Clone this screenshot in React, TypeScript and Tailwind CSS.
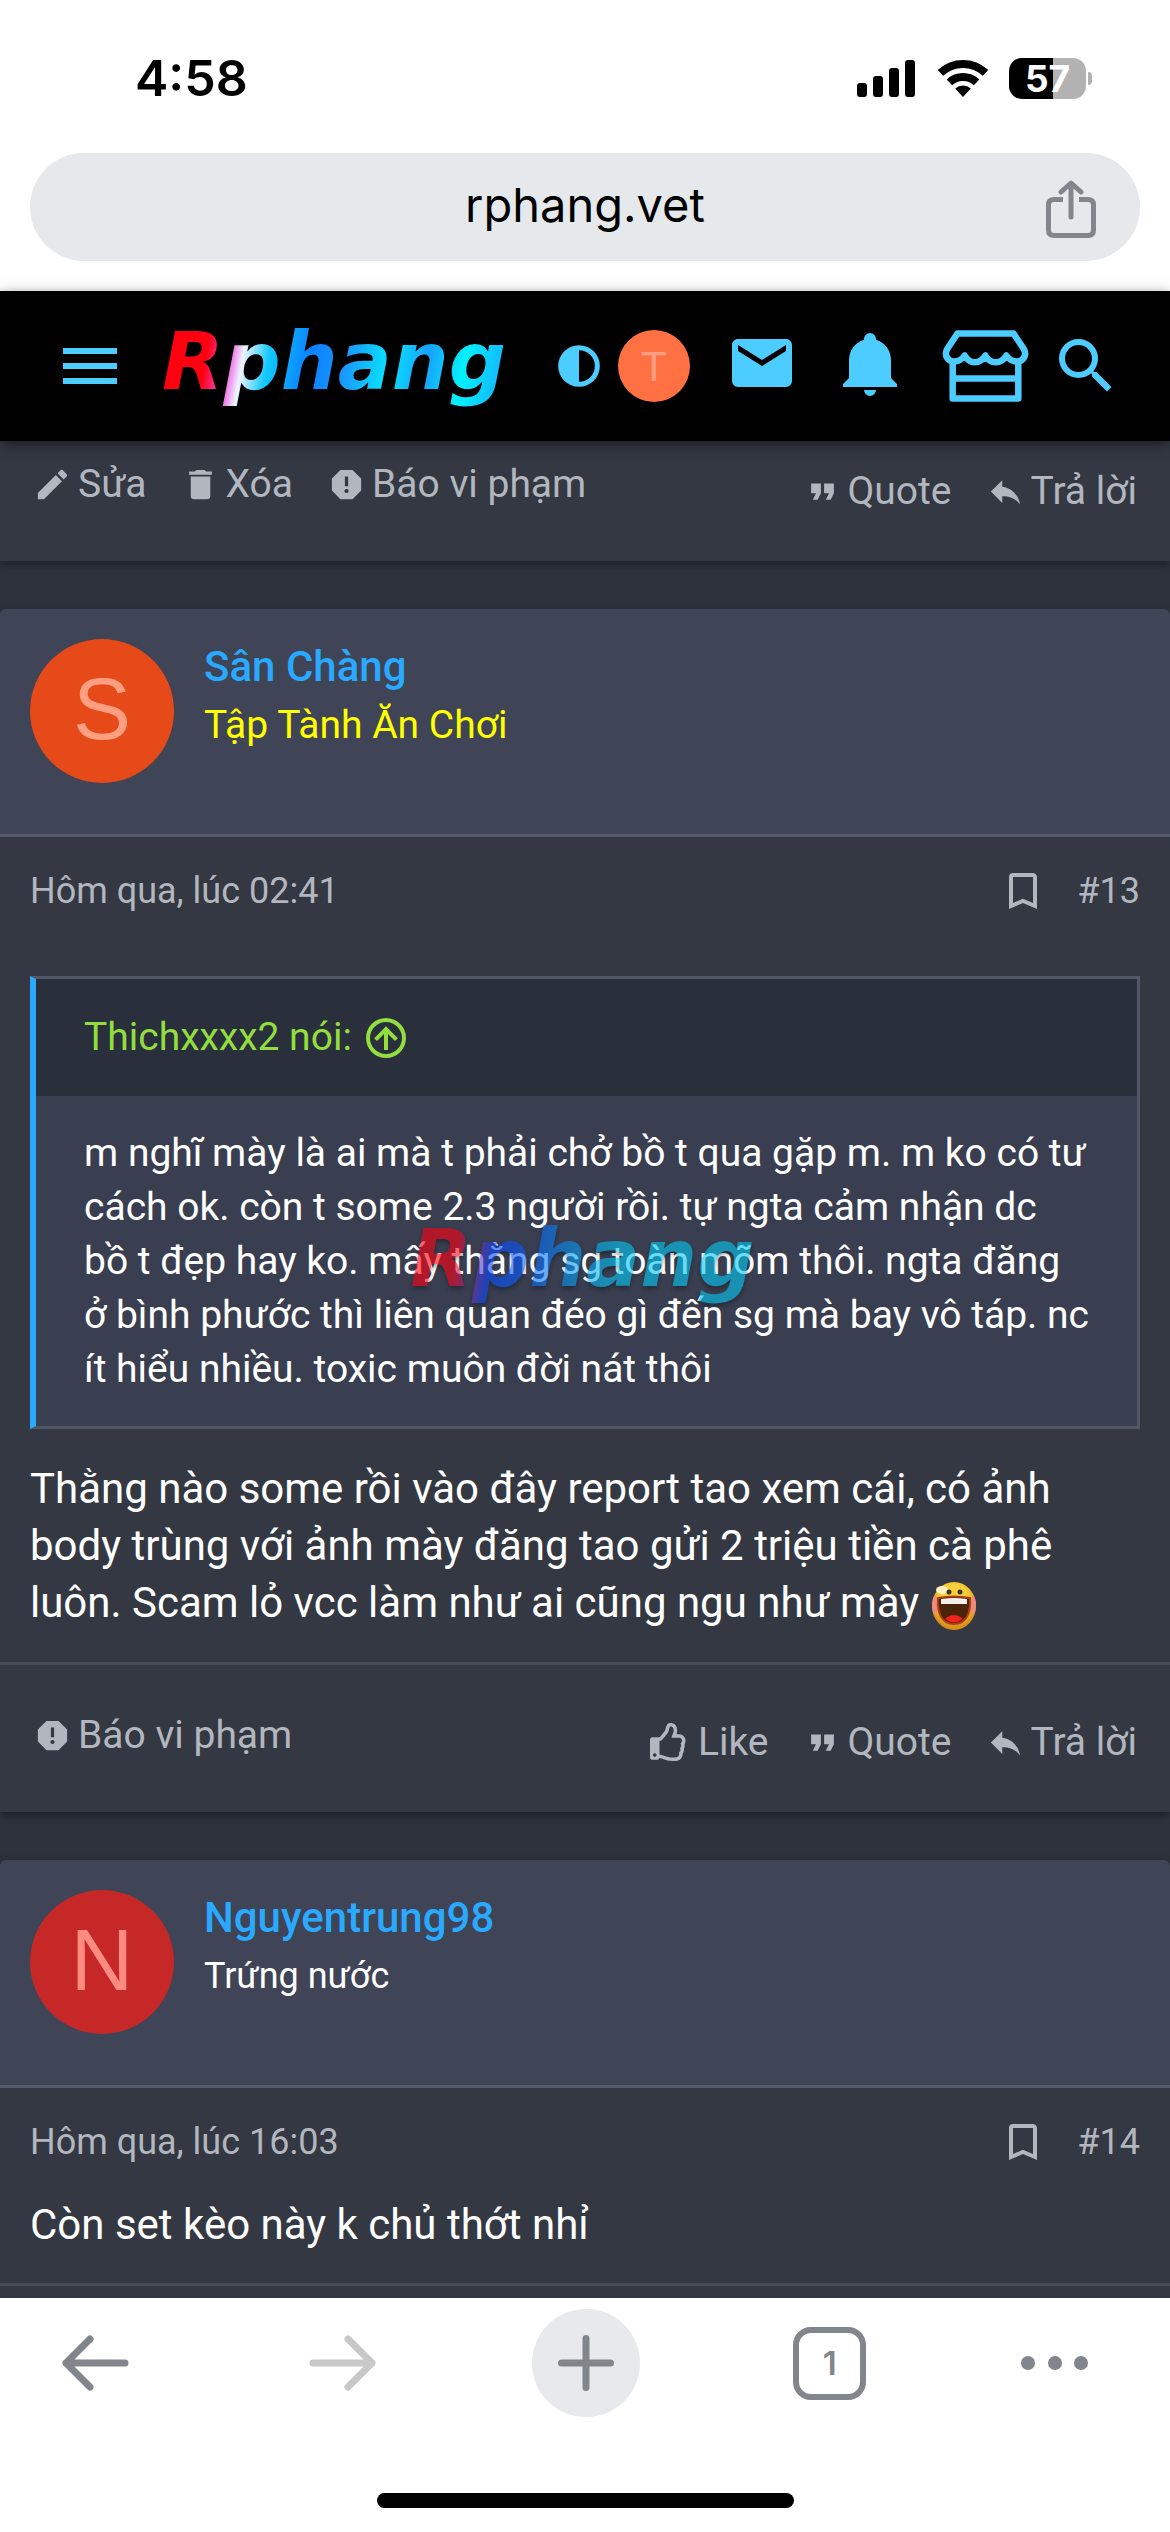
import type { ReactNode } from 'react';
import { FaRegThumbsUp } from 'react-icons/fa';

const icons = {
  menu: 'M3,6H21V8H3V6M3,11H21V13H3V11M3,16H21V18H3V16Z',
  contrast: 'M12,2A10,10 0 0,0 2,12A10,10 0 0,0 12,22A10,10 0 0,0 22,12A10,10 0 0,0 12,2M12,4.4A7.6,7.6 0 0,1 19.6,12A7.6,7.6 0 0,1 12,19.6V4.4Z',
  mail: 'M20,8L12,13L4,8V6L12,11L20,6M20,4H4C2.89,4 2,4.89 2,6V18A2,2 0 0,0 4,20H20A2,2 0 0,0 22,18V6C22,4.89 21.1,4 20,4Z',
  bell: 'M21,19V20H3V19L5,17V11C5,7.9 7.03,5.17 10,4.29C10,4.19 10,4.1 10,4A2,2 0 0,1 12,2A2,2 0 0,1 14,4C14,4.1 14,4.19 14,4.29C16.97,5.17 19,7.9 19,11V17L21,19M14,21A2,2 0 0,1 12,23A2,2 0 0,1 10,21H14Z',
  search: 'M9.5,3A6.5,6.5 0 0,1 16,9.5C16,11.11 15.41,12.59 14.44,13.73L14.71,14H15.5L20.5,19L19,20.5L14,15.5V14.71L13.73,14.44C12.59,15.41 11.11,16 9.5,16A6.5,6.5 0 0,1 3,9.5A6.5,6.5 0 0,1 9.5,3M9.5,5C7,5 5,7 5,9.5C5,12 7,14 9.5,14C12,14 14,12 14,9.5C14,7 12,5 9.5,5Z',
  edit: 'M20.71,7.04C21.1,6.65 21.1,6 20.71,5.63L18.37,3.29C18,2.9 17.35,2.9 16.96,3.29L15.12,5.12L18.87,8.87M3,17.25V21H6.75L17.81,9.93L14.06,6.18L3,17.25Z',
  trash: 'M19,4H15.5L14.5,3H9.5L8.5,4H5V6H19M6,19A2,2 0 0,0 8,21H16A2,2 0 0,0 18,19V7H6V19Z',
  report: 'M13,13H11V7H13M12,17.3A1.3,1.3 0 0,1 10.7,16A1.3,1.3 0 0,1 12,14.7A1.3,1.3 0 0,1 13.3,16A1.3,1.3 0 0,1 12,17.3M15.73,3H8.27L3,8.27V15.73L8.27,21H15.73L21,15.73V8.27L15.73,3Z',
  quote: 'M14,17H17L19,13V7H13V13H16M6,17H9L11,13V7H5V13H8L6,17Z',
  reply: 'M10,9V5L3,12L10,19V14.9C15,14.9 18.5,16.5 21,20C20,15 17,10 10,9Z',
  bookmark: 'M17,18L12,15.82L7,18V5H17M17,3H7A2,2 0 0,0 5,5V21L12,18L19,21V5C19,3.89 18.1,3 17,3Z',
  jump: 'M13,18V10L16.5,13.5L17.92,12.08L12,6.16L6.08,12.08L7.5,13.5L11,10V18H13M12,2A10,10 0 0,1 22,12A10,10 0 0,1 12,22A10,10 0 0,1 2,12A10,10 0 0,1 12,2M12,4A8,8 0 0,0 4,12A8,8 0 0,0 12,20A8,8 0 0,0 20,12A8,8 0 0,0 12,4Z',
};

function Icon({ name, className }: { name: keyof typeof icons; className: string }) {
  return (
    <svg viewBox="0 0 24 24" fill="currentColor" aria-hidden="true" className={`shrink-0 ${className}`}>
      <path d={icons[name]} />
    </svg>
  );
}

function StatusBar() {
  return (
    <div className="flex items-center justify-between pt-[54px] pb-[51px] pl-[135px] pr-[78px] font-['Inter',sans-serif] text-black">
      <span className="text-[50px] leading-[48px] font-semibold">4:58</span>
      <div className="flex items-center">
        <svg viewBox="0 0 58 37" className="w-[58px] h-[37px]" aria-hidden="true">
          <rect x="0" y="23" width="10" height="14" rx="3" />
          <rect x="16" y="16" width="10" height="21" rx="3" />
          <rect x="32" y="8" width="10" height="29" rx="3" />
          <rect x="48" y="0" width="10" height="37" rx="3" />
        </svg>
        <svg viewBox="0 0 50 37" className="ml-[23px] w-[50px] h-[37px]" aria-hidden="true">
          <path d="M2.5 12.9A33 33 0 0 1 47.5 12.9" fill="none" stroke="#000" strokeWidth="8" />
          <path d="M11.4 22.4A20 20 0 0 1 38.6 22.4" fill="none" stroke="#000" strokeWidth="8" />
          <path d="M25 37L17.2 28.6A11.5 11.5 0 0 1 32.8 28.6Z" />
        </svg>
        <div className="ml-[21px] flex h-[41px] w-[77px] items-center justify-center rounded-[13px] bg-linear-to-r from-black from-57% to-[#b2b2b2] to-57%">
          <span className="text-[37px] leading-none font-bold text-white">57</span>
        </div>
        <div className="ml-0.5 h-[13px] w-1 rounded-r-full bg-[#b2b2b2]" />
      </div>
    </div>
  );
}

function AddressBar() {
  return (
    <div className="px-[30px] pb-[30px]">
      <div className="grid h-[108px] grid-cols-[94px_1fr_94px] items-center rounded-full bg-[#e6e9ec]">
        <input
          aria-label="Address"
          defaultValue="rphang.vet"
          className="col-start-2 w-full bg-transparent pb-1 text-center font-['Inter',sans-serif] text-[47px] leading-[60px] text-black outline-none"
        />
        <button aria-label="Share" className="pt-1 text-[#80868b]">
          <svg viewBox="0 0 50 58" fill="none" stroke="currentColor" strokeWidth="5" strokeLinecap="round" className="w-[50px] h-[58px]" aria-hidden="true">
            <path d="M17 19.5H8Q2.5 19.5 2.5 25V50Q2.5 55.5 8 55.5H42Q47.5 55.5 47.5 50V25Q47.5 19.5 42 19.5H33" strokeLinecap="butt" />
            <path d="M25 4V37M15 12L25 3L35 12" strokeLinejoin="round" />
          </svg>
        </button>
      </div>
    </div>
  );
}

function StoreIcon() {
  return (
    <svg viewBox="0 0 87 72" fill="none" stroke="currentColor" strokeWidth="6.5" strokeLinejoin="round" className="w-[87px] h-[72px]" aria-hidden="true">
      <path d="M15.5 3.5H71.5L81.5 18.5C86 26 80 31.5 75 31.5Q68.5 31.5 64.3 25.5Q60.5 32.3 53.7 32.3Q47 32.3 43.3 25.5Q39.5 32.3 32.7 32.3Q26.5 32.3 22.7 25.5Q18.5 31.5 12 31.5C7 31.5 1 26 5.5 18.5Z" />
      <path d="M10.7 31V68.5H76.3V31M10.7 48.5H76.3" />
    </svg>
  );
}

function SiteHeader() {
  return (
    <header className="relative z-10 flex h-[150px] items-center bg-black pl-[54px] pr-12 text-[#4dccff] shadow-[0_3px_12px_rgba(0,0,0,0.5)]">
      <button aria-label="Menu">
        <Icon name="menu" className="size-[72px]" />
      </button>
      <a
        href="#home"
        className="ml-9 mb-2 bg-[linear-gradient(100deg,#ff0010_14%,#f050e0_20%,#eef4ff_24%,#10c8ff_31%,#0a80ff_42%,#1a98ff_52%,#08e4ff_64%,#18a0ff_74%,#04f0ff_84%,#18a8ff_98%)] bg-clip-text pr-2 font-['DejaVu_Sans',sans-serif] text-[80px] leading-[96px] font-bold text-transparent italic"
      >
        Rphang
      </a>
      <nav className="ml-auto flex items-center">
        <button aria-label="Style variation">
          <Icon name="contrast" className="size-[50px]" />
        </button>
        <a
          href="#account"
          className="ml-3.5 flex size-[72px] items-center justify-center rounded-full bg-[#ff7043] font-['Liberation_Sans',sans-serif] text-[43px] leading-none text-[#ff9e80]"
        >
          T
        </a>
        <div className="ml-9 flex gap-9 pb-1.5">
          <a href="#messages" aria-label="Messages">
            <Icon name="mail" className="size-[72px]" />
          </a>
          <a href="#alerts" aria-label="Alerts">
            <Icon name="bell" className="size-[72px]" />
          </a>
        </div>
        <a href="#store" aria-label="Store" className="ml-9">
          <StoreIcon />
        </a>
        <button aria-label="Search" className="ml-[21px]">
          <Icon name="search" className="size-[72px]" />
        </button>
      </nav>
    </header>
  );
}

function Action({ icon, children }: { icon: ReactNode; children: ReactNode }) {
  return (
    <a href="#action" className="flex items-center gap-1.5">
      {icon}
      {children}
    </a>
  );
}

const small = (name: keyof typeof icons) => <Icon name={name} className="size-[39px]" />;

function Actions({ own, className }: { own?: boolean; className: string }) {
  return (
    <div className={`flex items-start justify-between px-[33px] pb-[46px] text-[39px] leading-[48px] text-[#b2b6bf] ${className}`}>
      <div className="flex gap-[34px]">
        {own && <Action icon={small('edit')}>Sửa</Action>}
        {own && <Action icon={small('trash')}>Xóa</Action>}
        <Action icon={small('report')}>Báo vi phạm</Action>
      </div>
      <div className="mt-[7px] flex gap-[34px]">
        {!own && (
          <a href="#like" className="flex items-center gap-2.5">
            <FaRegThumbsUp className="size-[38px]" />
            Like
          </a>
        )}
        <Action icon={small('quote')}>Quote</Action>
        <Action icon={small('reply')}>Trả lời</Action>
      </div>
    </div>
  );
}

type PostProps = {
  name: string;
  title: string;
  titleClass: string;
  avatarClass: string;
  time: string;
  number: string;
  children: ReactNode;
};

function Post({ name, title, titleClass, avatarClass, time, number, children }: PostProps) {
  return (
    <article className="rounded-t-md bg-[#343842] shadow-[0_3px_9px_rgba(0,0,0,0.4)]">
      <div className="flex gap-[30px] rounded-t-md border-b-[3px] border-[#545a6b] bg-[#3f4456] px-[30px] pt-[30px] pb-[51px]">
        <div
          className={`flex size-36 shrink-0 items-center justify-center rounded-full pb-1.5 font-['Liberation_Sans',sans-serif] text-[87px] leading-none ${avatarClass}`}
        >
          {name[0]}
        </div>
        <div>
          <h3 className="text-[42px] leading-[56px] font-medium text-[#29a9ff]">
            <a href="#member">{name}</a>
          </h3>
          <p className={`mt-1.5 leading-[48px] ${titleClass}`}>{title}</p>
        </div>
      </div>
      <div className="flex items-center justify-between px-[30px] pt-[30px] text-[36px] leading-[48px] text-[#b2b6bf]">
        <time>{time}</time>
        <div className="flex items-center gap-[30px]">
          <button aria-label="Bookmark">
            <Icon name="bookmark" className="size-12" />
          </button>
          <a href="#post">{number}</a>
        </div>
      </div>
      {children}
    </article>
  );
}

function LaughSmiley() {
  return (
    <svg viewBox="0 0 48 50" role="img" aria-label="laugh" className="inline-block h-[50px] w-12 align-middle">
      <defs>
        <radialGradient id="face" cx="50%" cy="35%" r="60%">
          <stop offset="0.5" stopColor="#f7d03c" />
          <stop offset="1" stopColor="#d98f1c" />
        </radialGradient>
      </defs>
      <ellipse cx="24" cy="25" rx="22" ry="24" fill="url(#face)" />
      <ellipse cx="5" cy="24" rx="3" ry="9" fill="#f08a7c" />
      <ellipse cx="43" cy="24" rx="3" ry="9" fill="#f08a7c" />
      <ellipse cx="12" cy="9" rx="6" ry="4" fill="#fff1c0" />
      <circle cx="19" cy="11" r="2.5" fill="#3b342c" />
      <circle cx="30" cy="11" r="2.5" fill="#3b342c" />
      <path d="M8 17Q24 14 40 17C41 31 37 43 24 43S7 31 8 17Z" fill="#4a230b" stroke="#b03c10" strokeWidth="2" />
      <path d="M11 18Q24 16 37 18V23H11Z" fill="#f2efec" />
      <path d="M15 38Q24 30 33 38Q24 45 15 38Z" fill="#f3201c" />
    </svg>
  );
}

function BrowserToolbar() {
  return (
    <footer className="bg-white text-[#80868b]">
      <div className="flex items-center justify-between pt-[11px] pl-[60px] pr-20">
        <button aria-label="Back">
          <svg viewBox="0 0 70 58" fill="none" stroke="currentColor" strokeWidth="7" strokeLinecap="round" strokeLinejoin="round" className="h-[58px] w-[70px]" aria-hidden="true">
            <path d="M65 29H6M30 5L6 29L30 53" />
          </svg>
        </button>
        <button aria-label="Forward" disabled className="ml-6 text-[#c8c8c8]">
          <svg viewBox="0 0 70 58" fill="none" stroke="currentColor" strokeWidth="7" strokeLinecap="round" strokeLinejoin="round" className="h-[58px] w-[70px]" aria-hidden="true">
            <path d="M5 29H64M40 5L64 29L40 53" />
          </svg>
        </button>
        <button aria-label="New tab" className="flex size-[108px] items-center justify-center rounded-full bg-[#e8e9ec]">
          <svg viewBox="0 0 56 56" fill="none" stroke="currentColor" strokeWidth="7" strokeLinecap="round" className="size-14" aria-hidden="true">
            <path d="M28 3.5V52.5M3.5 28H52.5" />
          </svg>
        </button>
        <button
          aria-label="Tabs"
          className="flex size-[73px] items-center justify-center rounded-[18px] border-[6px] border-current font-['Inter',sans-serif] text-[33px] leading-none font-semibold"
        >
          1
        </button>
        <button aria-label="More">
          <svg viewBox="0 0 70 16" fill="currentColor" className="h-4 w-[70px]" aria-hidden="true">
            <circle cx="8" cy="8" r="7" />
            <circle cx="35" cy="8" r="7" />
            <circle cx="61" cy="8" r="7" />
          </svg>
        </button>
      </div>
      <div className="flex justify-center pt-[76px] pb-6">
        <div className="h-[15px] w-[417px] rounded-full bg-black" />
      </div>
    </footer>
  );
}

export default function App() {
  return (
    <div className="flex min-h-screen flex-col bg-white font-['Roboto',sans-serif]">
      <StatusBar />
      <AddressBar />
      <SiteHeader />

      <main className="flex flex-1 flex-col gap-12 overflow-hidden bg-[#2e323d] text-white">
        <article className="bg-[#343842] shadow-[0_3px_9px_rgba(0,0,0,0.4)]">
          <Actions own className="pt-[19px]" />
        </article>

        <Post
          name="Sân Chàng"
          title="Tập Tành Ăn Chơi"
          titleClass="text-[39px] text-[#ffff00]"
          avatarClass="bg-[#e64a19] text-[#ff9e80]"
          time="Hôm qua, lúc 02:41"
          number="#13"
        >
          <div className="border-b-[3px] border-[#484c59] px-[30px] pt-[61px] pb-[31px]">
            <blockquote className="mb-[31px] border-[3px] border-l-[6px] border-[#515766] border-l-[#29a9ff] bg-[#393e50]">
              <a href="#source" className="flex items-center gap-2.5 bg-[#2a2f3c] px-12 py-[30px] text-[39px] leading-[57px] text-[#93de3f]">
                Thichxxxx2 nói:
                <Icon name="jump" className="size-12" />
              </a>
              <div className="relative py-[30px] pr-11 pl-12">
                <p className="text-[39px] leading-[54px]">
                  m nghĩ mày là ai mà t phải chở bồ t qua gặp m. m ko có tư
                  <br />
                  cách ok. còn t some 2.3 người rồi. tự ngta cảm nhận dc
                  <br />
                  bồ t đẹp hay ko. mấy thằng sg toàn mõm thôi. ngta đăng
                  <br />
                  ở bình phước thì liên quan đéo gì đến sg mà bay vô táp. nc
                  <br />
                  ít hiểu nhiều. toxic muôn đời nát thôi
                </p>
                {/* site watermark floats over the quoted text */}
                <div
                  aria-hidden="true"
                  className="pointer-events-none absolute top-[115px] left-1/2 -translate-x-1/2 bg-[linear-gradient(100deg,#ff0010_14%,#8030b0_20%,#0848ff_24%,#0860ff_34%,#0898f0_46%,#04c8f4_58%)] bg-clip-text pr-2 font-['DejaVu_Sans',sans-serif] text-[80px] leading-[96px] font-bold text-transparent italic opacity-60 drop-shadow-[0_3px_2px_rgba(0,0,0,0.5)]"
                >
                  Rphang
                </div>
              </div>
            </blockquote>
            <p className="text-[42px] leading-[57px]">
              Thằng nào some rồi vào đây report tao xem cái, có ảnh body trùng với ảnh mày đăng tao gửi 2 triệu tiền cà phê luôn. Scam lỏ vcc làm như ai cũng ngu như mày <LaughSmiley />
            </p>
          </div>
          <Actions className="pt-[46px]" />
        </Post>

        <Post
          name="Nguyentrung98"
          title="Trứng nước"
          titleClass="text-[36px] text-white"
          avatarClass="bg-[#c62828] text-[#ff8a80]"
          time="Hôm qua, lúc 16:03"
          number="#14"
        >
          <p className="border-b-[3px] border-[#484c59] px-[30px] py-[30px] text-[42px] leading-[57px]">Còn set kèo này k chủ thớt nhỉ</p>
          <div className="h-3" />
        </Post>
      </main>

      <BrowserToolbar />
    </div>
  );
}
